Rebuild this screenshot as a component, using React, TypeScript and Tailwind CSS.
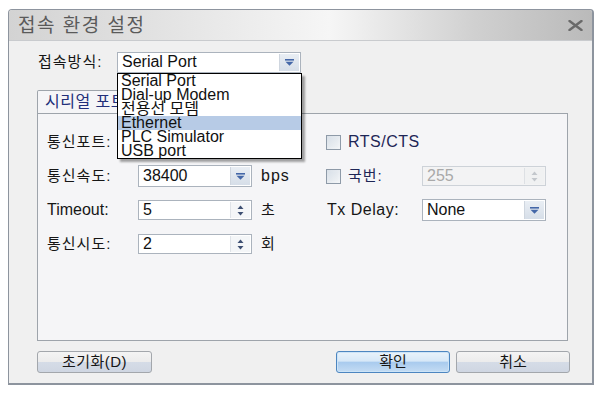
import React from 'react';

const DropArrow: React.FC<{ color?: string }> = ({ color = '#4467a8' }) => (
  <svg width="9" height="7" viewBox="0 0 9 7">
    <rect x="0" y="0" width="9" height="1.6" fill={color} />
    <path d="M0.5 2.8 H8.5 L4.5 6.8 Z" fill={color} />
  </svg>
);

const SpinArrows: React.FC<{ color?: string }> = ({ color = '#3d4f72' }) => (
  <svg width="7" height="11" viewBox="0 0 7 11">
    <path d="M3.5 0.5 L6.5 4 H0.5 Z" fill={color} />
    <path d="M0.5 7 H6.5 L3.5 10.5 Z" fill={color} />
  </svg>
);

const Combo: React.FC<{ value: string; width: string; height?: string }> = ({ value, width, height = 'h-[22px]' }) => (
  <div className={`flex ${width} ${height} items-stretch border border-[#abb3bd] bg-white`}>
    <div className="flex flex-1 items-center pl-[4px] text-[16px] text-[#111]">{value}</div>
    <div className="m-px flex w-[20px] items-center justify-center border-l border-[#cfd6df] bg-[linear-gradient(to_bottom,#e9eef4,#d6dee8)]">
      <DropArrow />
    </div>
  </div>
);

const Spin: React.FC<{ value: string; disabled?: boolean }> = ({ value, disabled }) => (
  <div
    className={`flex h-[20px] items-stretch border ${
      disabled ? 'w-[124px] border-[#cdd2d8] bg-[#f3f3f4]' : 'w-[114px] border-[#abb3bd] bg-white'
    }`}
  >
    <div className={`flex flex-1 items-center pl-[4px] text-[16px] ${disabled ? 'text-[#a9a9a9]' : 'text-[#111]'}`}>
      {value}
    </div>
    <div
      className={`m-px flex w-[20px] items-center justify-center border-l ${
        disabled ? 'border-[#dde0e4] bg-[#f0f1f2]' : 'border-[#dfe3e8] bg-[#f4f6f8]'
      }`}
    >
      <SpinArrows color={disabled ? '#c3c7cc' : '#3d4f72'} />
    </div>
  </div>
);

const Check: React.FC = () => (
  <div className="h-[15px] w-[15px] border border-[#8e9aa8] bg-[linear-gradient(135deg,#d9e0e8,#f4f6f8)] p-[2px]">
    <div className="h-full w-full bg-[linear-gradient(135deg,#dbe2ea,#eef1f4)]" />
  </div>
);

const options = ['Serial Port', 'Dial-up Modem', '전용선 모뎀', 'Ethernet', 'PLC Simulator', 'USB port'];

const App: React.FC = () => {
  return (
    <div className="h-[394px] w-[600px] bg-white pl-[8px] pt-[9px] font-['Liberation_Sans','Noto_Sans_CJK_KR',sans-serif] text-[15px] text-[#161616]">
      <div className="flex h-[376px] w-[586px] flex-col overflow-hidden rounded-t-[4px] border border-r-2 border-b-2 border-[#8d949e] bg-[#f0f0f0]">
        {/* title bar */}
        <div className="flex h-[31px] items-center justify-between border-b border-[#c9cbce] bg-[linear-gradient(to_right,#d3d3d3_0%,#e2e2e2_25%,#f6f6f6_55%,#d0d0d0_80%,#bababa_100%)] pl-[9px] pr-[9px]">
          <span className="text-[19px] leading-none tracking-[1.5px] text-[#5a5a5a]">접속 환경 설정</span>
          <svg width="15" height="11" viewBox="0 0 15 11">
            <path d="M1.5 1 L13.5 10 M13.5 1 L1.5 10" stroke="#6a6a6a" strokeWidth="2.4" strokeLinecap="round" />
          </svg>
        </div>

        {/* body */}
        <div className="flex flex-1 flex-col pl-[28px] pt-[10px]">
          <div className="flex items-center">
            <span className="w-[80px] pl-[1px] tracking-[1px]">접속방식:</span>
            <div className="relative">
              <Combo value="Serial Port" width="w-[184px]" height="h-[21px]" />
              <div className="absolute left-0 top-full z-10 w-[185px] border border-black bg-white shadow-[3px_3px_2px_rgba(0,0,0,0.35)]">
                {options.map((o) => (
                  <div
                    key={o}
                    className={`h-[14px] pl-[3px] text-[16px] leading-[14px] text-[#111] ${
                      o === 'Ethernet' ? 'bg-[#b7cbe6]' : ''
                    }`}
                  >
                    {o}
                  </div>
                ))}
              </div>
            </div>
          </div>

          {/* tab */}
          <div className="mt-[16px] flex">
            <div className="-mb-px flex h-[24px] w-[96px] items-center rounded-t-[2px] border border-b-0 border-[#9ea4ab] bg-[#f5f5f7] pl-[7px] text-[16px] tracking-[0.5px] text-[#23307a]">
              시리얼 포트
            </div>
          </div>
          <div className="flex h-[228px] w-[531px] flex-col gap-[13px] border border-[#9ea4ab] bg-[#f5f5f7] pl-[9px] pt-[18px]">
            <div className="flex h-[21px] items-center">
              <div className="flex w-[279px] items-center">
                <span className="w-[91px] tracking-[1px]">통신포트:</span>
                <Combo value="" width="w-[114px]" height="h-[21px]" />
              </div>
              <div className="flex items-center gap-[7px]">
                <Check />
                <span className="text-[16px] tracking-[0.5px] text-[#1e2656]">RTS/CTS</span>
              </div>
            </div>

            <div className="flex h-[21px] items-center">
              <div className="flex w-[279px] items-center">
                <span className="w-[91px] tracking-[1px]">통신속도:</span>
                <Combo value="38400" width="w-[114px]" height="h-[22px]" />
                <span className="ml-[9px] text-[16px] tracking-[1px]">bps</span>
              </div>
              <div className="flex items-center">
                <div className="flex w-[96px] items-center gap-[7px]">
                  <Check />
                  <span className="tracking-[1px] text-[#1e2656]">국번:</span>
                </div>
                <Spin value="255" disabled />
              </div>
            </div>

            <div className="flex h-[21px] items-center">
              <div className="flex w-[279px] items-center">
                <span className="w-[91px] text-[16px]">Timeout:</span>
                <Spin value="5" />
                <span className="ml-[9px]">초</span>
              </div>
              <div className="flex items-center">
                <span className="w-[96px] pl-[1px] text-[16px] tracking-[0.5px]">Tx Delay:</span>
                <Combo value="None" width="w-[124px]" height="h-[22px]" />
              </div>
            </div>

            <div className="flex h-[21px] items-center">
              <div className="flex w-[279px] items-center">
                <span className="w-[91px] tracking-[1px]">통신시도:</span>
                <Spin value="2" />
                <span className="ml-[9px]">회</span>
              </div>
            </div>
          </div>

          {/* buttons */}
          <div className="mt-[10px] flex w-[533px] justify-between">
            <button className="h-[22px] w-[115px] rounded-[3px] border border-[#a3a7ac] bg-[linear-gradient(to_bottom,#f4f4f4_0%,#ececec_48%,#d5dce7_50%,#cfd6e2_100%)] text-[15px] leading-none tracking-[0.5px]">
              초기화(D)
            </button>
            <div className="flex gap-[6px]">
              <button className="h-[22px] w-[114px] rounded-[3px] border border-[#4d86c0] bg-[linear-gradient(to_bottom,#e9f3fb_0%,#d7e8f7_45%,#a9cbee_52%,#c4dcf3_100%)] text-[15px] leading-none shadow-[inset_0_0_0_1px_#cde4f7]">
                확인
              </button>
              <button className="h-[22px] w-[114px] rounded-[3px] border border-[#a3a7ac] bg-[linear-gradient(to_bottom,#f4f4f4_0%,#ececec_48%,#d5dce7_50%,#cfd6e2_100%)] text-[15px] leading-none">
                취소
              </button>
            </div>
          </div>
        </div>
      </div>
    </div>
  );
};

export default App;
